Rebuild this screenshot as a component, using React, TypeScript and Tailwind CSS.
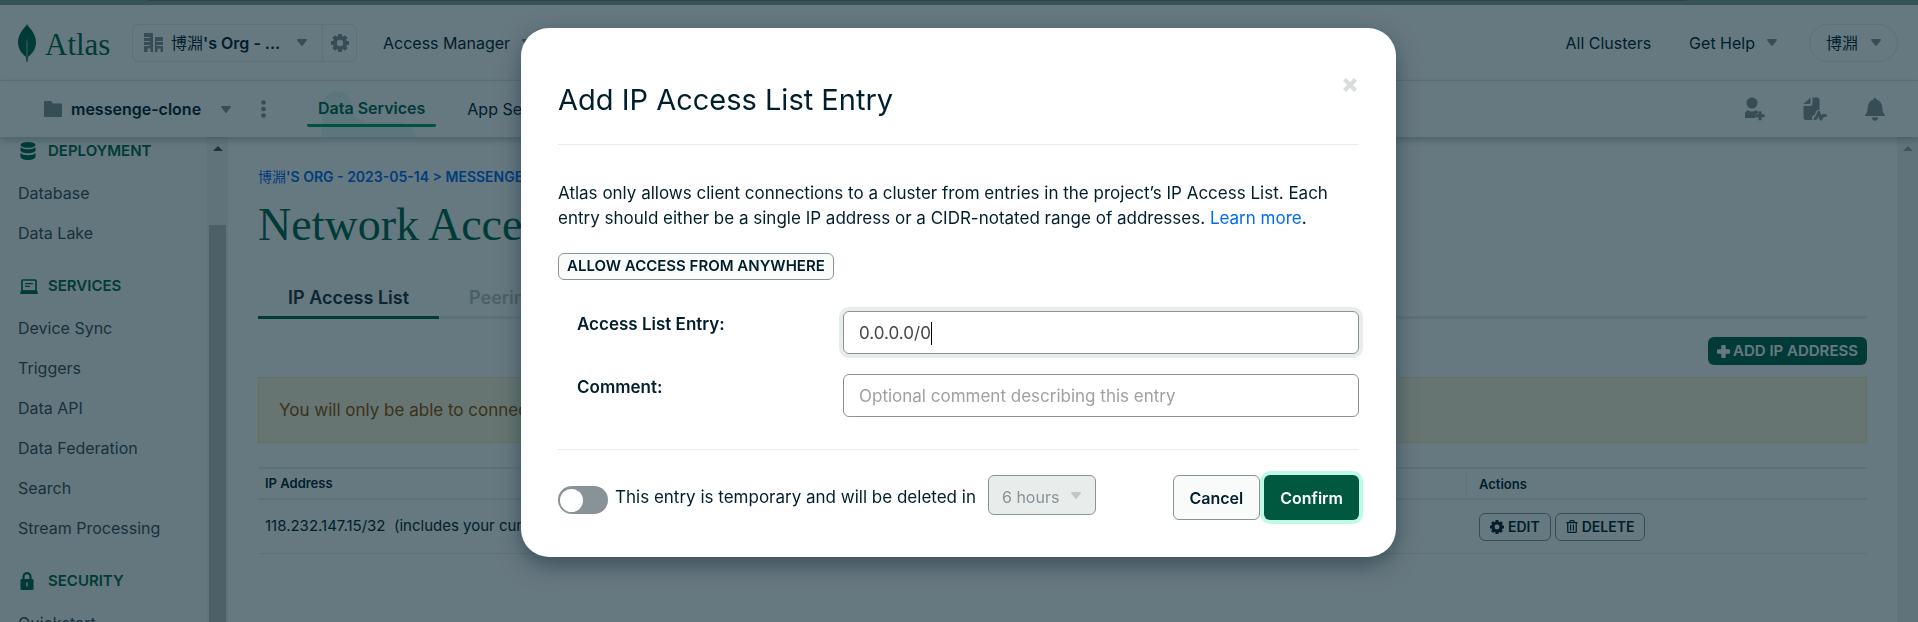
import React from "react";
import { FaRegTrashAlt } from "react-icons/fa";

function Caret({ className = "" }: { className?: string }) {
  return (
    <svg className={`h-[7px] w-[10px] shrink-0 ${className}`} viewBox="0 0 10 7" fill="currentColor" aria-hidden="true">
      <path d="M1 0h8c.8 0 1.200.8.7 1.400L5.700 6.600a.9.9 0 0 1-1.400 0L.3 1.400C-.2.8.2 0 1 0z" />
    </svg>
  );
}

function Gear({ className = "" }: { className?: string }) {
  return (
    <svg className={className} viewBox="0 0 18 18" fill="currentColor" aria-hidden="true">
      <circle cx="9" cy="9" r="5.200" fill="none" stroke="currentColor" strokeWidth="4" />
      {[0, 45, 90, 135, 180, 225, 270, 315].map((a) => (
        <rect key={a} x="7" y="0" width="4" height="4" rx="0.8" transform={`rotate(${a} 9 9)`} />
      ))}
    </svg>
  );
}

function Plus() {
  return (
    <svg className="h-[13px] w-[13px]" viewBox="0 0 13 13" fill="currentColor" aria-hidden="true">
      <path d="M5 0h3c.4 0 .7.3.7.700v3.600h3.600c.4 0 .7.3.7.700v3c0 .4-.3.700-.7.700H8.700v3.600c0 .4-.3.700-.7.700H5c-.4 0-.7-.3-.7-.700V8.700H.7C.3 8.700 0 8.400 0 8V5c0-.4.3-.700.7-.700h3.600V.7C4.300.3 4.600 0 5 0z" />
    </svg>
  );
}

function Cross() {
  return (
    <svg className="h-[14px] w-[14px]" viewBox="0 0 14 14" fill="none" stroke="currentColor" strokeWidth="4.200" aria-hidden="true">
      <path d="M1.500 1.500l11 11M12.500 1.500l-11 11" />
    </svg>
  );
}

function Leaf() {
  return (
    <svg className="h-[38px] w-[18px]" viewBox="0 0 18 38" aria-hidden="true">
      <path
        fill="#00684A"
        d="M9 0C7.500 3.500 0 8.500 0 18.500 0 26 5 30.500 8 33l.5 5h1l.5-5c3-2.500 8-7 8-14.500C18 8.500 10.500 3.500 9 0z"
      />
      <path fill="#9dbdb2" d="M9 14l.6 5-.2 14h-.8l-.2-14z" />
    </svg>
  );
}

function Building() {
  return (
    <svg className="h-[19px] w-[19px]" viewBox="0 0 19 19" aria-hidden="true">
      <path fill="#889397" d="M1 0h7c.6 0 1 .4 1 1v18H6.500v-3.500h-3V19H0V1c0-.6.400-1 1-1zM11 4h7c.6 0 1 .4 1 1v14h-2.500v-3.500h-3V19H11z" />
      <path stroke="#fff" strokeWidth="1.200" d="M0 4.500h6M0 8.500h6M0 12.500h6M12.500 8.500H19M12.500 12.500H19" />
    </svg>
  );
}

function DatabaseIcon() {
  return (
    <svg className="h-[18px] w-4" viewBox="0 0 16 18" fill="#00684A" aria-hidden="true">
      <ellipse cx="8" cy="2.900" rx="7.500" ry="2.900" />
      <path d="M.5 5c1.500 1.800 4.500 2.300 7.500 2.300S14 6.800 15.500 5v3.200C15.500 10 12 11.300 8 11.300S.5 10 .5 8.200z" />
      <path d="M.5 11c1.500 1.700 4.500 2.200 7.500 2.200s6-.5 7.500-2.200v3.800C15.500 16.600 12 18 8 18S.5 16.600.5 14.800z" />
    </svg>
  );
}

function LaptopIcon() {
  return (
    <svg className="h-[15px] w-[18px]" viewBox="0 0 18 15" aria-hidden="true">
      <rect x="2" y="1" width="14" height="11" rx="0.800" fill="none" stroke="#00684A" strokeWidth="1.700" />
      <path d="M5 4.600h8M5 7.400h5" stroke="#00684A" strokeWidth="1.200" />
      <path d="M1 11.500h16l1 3c0 .3-.2.5-.5.5H.5c-.3 0-.5-.2-.5-.5z" fill="#00684A" />
    </svg>
  );
}

function LockIcon() {
  return (
    <svg className="h-[18px] w-[14px]" viewBox="0 0 14 18" aria-hidden="true">
      <path d="M3.500 8V5a3.500 3.800 0 0 1 7 0v3" fill="none" stroke="#00684A" strokeWidth="2.200" />
      <rect x="0.500" y="7" width="13" height="11" rx="1.200" fill="#00684A" />
      <path d="M6 10.500h2v4H6z" fill="#fff" opacity=".7" />
    </svg>
  );
}

function InviteIcon() {
  return (
    <svg className="h-6 w-5" viewBox="0 0 20 24" fill="#889397" aria-hidden="true">
      <circle cx="7" cy="6" r="5.500" />
      <path d="M3 13.200c1.200.9 2.600 1.200 4 1.200s2.800-.3 4-1.200c1 .4 1.700 1 2 1.800v1.600c-1.700.2-3 1-3 2.400 0 .9.4 1.600 1 2H0v-4c0-1.800 1.200-3.200 3-3.800z" />
      <path d="M13.500 14.200h3v3.100h3.100v2.900h-3.100V23.300h-3v-3.100h-3.100v-2.900h3.100z" />
    </svg>
  );
}

function ActivityIcon() {
  return (
    <svg className="h-6 w-6" viewBox="0 0 24 24" fill="#889397" aria-hidden="true">
      <path d="M7.500.5V6c0 .6-.4 1-1 1H.5z" />
      <path d="M9.500.5H14c1.400 0 2.500 1.100 2.500 2.500v10.500c-1.500-.8-2.800-.3-3.500 1.200L11.500 18c-1.800.4-2.600 1.400-2.600 2.700 0 .9.300 1.500.9 2.300H3C1.600 23 .5 21.900.5 20.500V9H7c1.400 0 2.500-1.100 2.500-2.500z" />
      <path d="M11 21.500h2l2.800-6.300 2 7 2.200-3.700h3.500" fill="none" stroke="#889397" strokeWidth="2.800" strokeLinejoin="round" />
    </svg>
  );
}

function BellIcon() {
  return (
    <svg className="h-[23px] w-5" viewBox="0 0 20 23" fill="#889397" aria-hidden="true">
      <path d="M10 0c.8 0 1.400.6 1.500 1.400C14.800 2.300 17 5.200 17.300 9l.5 5.200 1.700 2c.8 1 .3 1.800-.7 1.800H1.200c-1 0-1.500-.8-.7-1.800l1.700-2L2.700 9C3 5.200 5.200 2.300 8.500 1.400 8.600.6 9.200 0 10 0z" />
      <path d="M6.800 19.500h6.400c-.2 2-1.500 3.300-3.200 3.300s-3-1.300-3.200-3.300z" />
    </svg>
  );
}

function ScrollArrow({ className }: { className: string }) {
  return (
    <svg className={`h-[5px] w-[10px] ${className}`} viewBox="0 0 10 5" fill="currentColor" aria-hidden="true">
      <path d="M5 0l5 5H0z" />
    </svg>
  );
}

const sections = [
  { title: "DEPLOYMENT", icon: <DatabaseIcon />, items: ["Database", "Data Lake"] },
  {
    title: "SERVICES",
    icon: <LaptopIcon />,
    items: ["Device Sync", "Triggers", "Data API", "Data Federation", "Search", "Stream Processing"],
  },
  { title: "SECURITY", icon: <LockIcon />, items: ["Quickstart"] },
];

function TopNav() {
  return (
    <header className="flex h-[76px] shrink-0 items-center border-b border-[#E8EDEB] text-base whitespace-nowrap">
      <a href="#" className="ml-[18px] flex w-[114px] items-center gap-[9px]" aria-label="Atlas home">
        <Leaf />
        <span className="pt-1 font-['Liberation_Serif',serif] text-[31px] leading-9 text-[#00684A]">Atlas</span>
      </a>
      <div className="flex h-[38px] w-[225px] rounded-md border border-[#E8EDEB]">
        <button className="flex flex-1 items-center pl-[11px] font-semibold">
          <Building />
          <span className="ml-2"><span className="font-normal">博淵</span>'s Org - ...</span>
          <Caret className="mr-[15px] ml-auto text-[#889397]" />
        </button>
        <button className="flex w-[34px] items-center justify-center border-l border-[#E8EDEB] text-[#889397]" aria-label="Organization settings">
          <Gear className="h-[18px] w-[18px]" />
        </button>
      </div>
      <button className="ml-[26px] flex items-center gap-3">
        Access Manager <Caret className="text-[#889397]" />
      </button>
      <nav className="mr-5 ml-auto flex items-center">
        <a href="#">All Clusters</a>
        <button className="ml-[38px] flex items-center gap-3">
          Get Help <Caret className="text-[#889397]" />
        </button>
        <button className="ml-8 flex h-[38px] w-[89px] items-center justify-center gap-[13px] rounded-full border border-[#E8EDEB]">
          博淵 <Caret className="text-[#889397]" />
        </button>
      </nav>
    </header>
  );
}

function ProjectNav() {
  return (
    <div className="relative z-10 flex h-14 shrink-0 items-center bg-white text-base whitespace-nowrap shadow-[0_3px_7px_rgba(0,30,43,0.25)]">
      <svg className="absolute bottom-0 left-[322px] h-[46px] w-[94px]" viewBox="0 0 94 46" fill="#E3FCF7" aria-hidden="true">
        <path d="M0 46V15a15 15 0 0 1 30 0c1 10 7 16 16 16h30c10 0 17 7 18 15z" />
      </svg>
      <button className="ml-11 flex items-center font-semibold">
        <svg className="h-4 w-[18px]" viewBox="0 0 18 16" fill="#889397" aria-hidden="true">
          <path d="M1 0h6l2 2.500h8c.6 0 1 .4 1 1V15c0 .6-.4 1-1 1H1c-.6 0-1-.4-1-1V1c0-.6.400-1 1-1z" />
        </svg>
        <span className="ml-[9px] w-[150px] text-left">messenge-clone</span>
        <Caret className="text-[#889397]" />
      </button>
      <button className="ml-[30px] text-[#889397]" aria-label="Project options">
        <svg className="h-[18px] w-[5px]" viewBox="0 0 5 18" fill="currentColor" aria-hidden="true">
          <circle cx="2.500" cy="2.500" r="2.300" /><circle cx="2.500" cy="9" r="2.300" /><circle cx="2.500" cy="15.500" r="2.300" />
        </svg>
      </button>
      <nav className="relative ml-[41px] flex items-center">
        <a href="#" className="mt-[5px] rounded-b-xs border-b-[3px] border-[#00A35C] px-[11px] pb-1 font-semibold text-[#00684A]">Data Services</a>
        <a href="#" className="ml-[31px]">App Services</a>
      </nav>
      <div className="mr-[33px] ml-auto flex items-center gap-[38px]">
        <button aria-label="Invite to project"><InviteIcon /></button>
        <button aria-label="Activity feed"><ActivityIcon /></button>
        <button aria-label="Alerts"><BellIcon /></button>
      </div>
    </div>
  );
}

function Sidebar() {
  return (
    <aside className="flex w-[228px] shrink-0 overflow-hidden bg-[#F9FBFA]">
      <nav className="flex-1 pt-1 pl-[18px] whitespace-nowrap">
        {sections.map((s) => (
          <section key={s.title} className="mb-[23px]">
            <h2 className="mb-3 flex h-5 items-center text-[15px] font-semibold text-[#00684A]">
              <span className="flex w-[30px] justify-start pl-[2px]">{s.icon}</span>
              {s.title}
            </h2>
            <ul>
              {s.items.map((i) => (
                <li key={i} className="flex h-10 items-center">
                  <a href="#" className="text-base text-[#3D4F58]">{i}</a>
                </li>
              ))}
            </ul>
          </section>
        ))}
      </nav>
      <div className="flex w-[21px] flex-col items-center bg-[#F1F1F1] pt-[9px]">
        <ScrollArrow className="text-[#505050]" />
        <div className="mt-[74px] w-[17px] flex-1 bg-[#C1C1C1]" />
      </div>
    </aside>
  );
}

function Main() {
  return (
    <main className="min-w-0 flex-1 px-[30px] pt-[30px]">
      <a href="#" className="block text-sm leading-5 font-semibold whitespace-nowrap text-[#016BF8]">
        <span className="font-normal">博淵</span>'S ORG - 2023-05-14 &gt; MESSENGE-CLONE
      </a>
      <h1 className="mt-[13px] font-['Liberation_Serif',serif] text-[46px] leading-[50px] text-[#00684A]">Network Access</h1>
      <div className="mt-[25px] flex h-11 border-b-[3px] border-[#E8EDEB] text-lg whitespace-nowrap">
        <button className="-mb-[3px] border-b-[3px] border-[#00684A] px-[30px] pt-1 font-semibold text-[#21313C]">IP Access List</button>
        <button className="px-[30px] pt-1 font-semibold text-[#B8C4C2]">Peering</button>
      </div>
      <div className="mt-[18px] flex justify-end">
        <button className="flex h-7 items-center gap-[3px] rounded-md bg-[#00684A] px-[9px] text-[15px] font-semibold text-white">
          <Plus /> ADD IP ADDRESS
        </button>
      </div>
      <p className="mt-3 h-[66px] truncate border border-[#FFEC9E] bg-[#FEF7DB] px-5 text-[17px] leading-[64px] text-[#944F01]">
        You will only be able to connect to your cluster from the following list of IP Addresses:
      </p>
      <table className="mt-6 w-full border-separate border-spacing-0 text-left whitespace-nowrap">
        <thead>
          <tr className="text-[13px] leading-[29px]">
            <th className="border-y-2 border-[#E8EDEB] px-[7px] font-semibold">IP Address</th>
            <th className="w-[401px] border-y-2 border-[#E8EDEB] font-semibold">
              <div className="h-5 border-l border-[#E8EDEB] pl-3 leading-5">Actions</div>
            </th>
          </tr>
        </thead>
        <tbody>
          <tr className="h-[54px]">
            <td className="border-b border-[#E8EDEB] px-[7px] text-[15px]">118.232.147.15/32&nbsp; (includes your current IP address)</td>
            <td className="border-b border-[#E8EDEB] pl-[13px]">
              <div className="flex gap-1">
                <button className="flex h-7 items-center gap-1 rounded-md border border-[#889397] px-[10px] text-sm font-semibold">
                  <Gear className="h-[14px] w-[14px]" /> EDIT
                </button>
                <button className="flex h-7 items-center gap-1 rounded-md border border-[#889397] px-[10px] text-sm font-semibold">
                  <FaRegTrashAlt className="h-[13px] w-3" /> DELETE
                </button>
              </div>
            </td>
          </tr>
        </tbody>
      </table>
    </main>
  );
}

function AccessModal() {
  return (
    <div className="fixed inset-0 z-20 flex items-start justify-center bg-[#001E2B]/60 pt-7 pr-px">
      <div
        role="dialog"
        aria-labelledby="dialog-title"
        className="w-[875px] max-w-full rounded-[28px] bg-white px-[37px] pb-[37px] shadow-[0_8px_24px_-2px_rgba(0,30,43,0.5)]"
      >
        <div className="flex items-start justify-between border-b border-[#E8EDEB] pt-[50px] pb-[26px]">
          <h2 id="dialog-title" className="mt-1 text-[29px] leading-9">Add IP Access List Entry</h2>
          <button className="mr-[2px] text-[#D9DDDC]" aria-label="Close"><Cross /></button>
        </div>
        <p className="mt-9 text-[17px] leading-[25px]">
          Atlas only allows client connections to a cluster from entries in the project’s IP Access List. Each entry should
          either be a single IP address or a CIDR-notated range of addresses. <a href="#" className="text-[#016BF8]">Learn more</a>.
        </p>
        <button className="mt-[22px] flex h-[27px] items-center rounded-md border border-[#889397] bg-[#F9FBFA] px-2 text-[15px] font-semibold">
          ALLOW ACCESS FROM ANYWHERE
        </button>
        <div className="mt-[31px] grid grid-cols-[266px_1fr] gap-x-0 gap-y-5 pl-[19px] text-[17px]">
          <label htmlFor="entry" className="leading-[26px] font-semibold">Access List Entry:</label>
          <div className="relative">
            <input
              id="entry"
              defaultValue="0.0.0.0/0"
              className="h-[43px] w-full rounded-md border border-[#889397] px-[15px] text-[#494747] ring-4 ring-[#E8EDEB] outline-none"
            />
            <span className="absolute top-[11px] left-[88px] h-[23px] w-px bg-black" />
          </div>
          <label htmlFor="comment" className="leading-[26px] font-semibold">Comment:</label>
          <input
            id="comment"
            placeholder="Optional comment describing this entry"
            className="h-[43px] w-full rounded-md border border-[#889397] px-[15px] outline-none placeholder:text-[#A0A0A0]"
          />
        </div>
        <div className="mt-8 flex items-start border-t border-[#E8EDEB] pt-[25px]">
          <input
            id="temporary"
            type="checkbox"
            role="switch"
            className="mt-[11px] flex h-7 w-[50px] shrink-0 appearance-none items-center rounded-full bg-[#889397] pl-[2px] before:h-[23px] before:w-[23px] before:rounded-full before:bg-white before:content-['']"
          />
          <label htmlFor="temporary" className="ml-[7px] text-[17px] leading-[44px] whitespace-nowrap">
            This entry is temporary and will be deleted in
          </label>
          <div className="relative ml-3">
            <select
              aria-label="Delete after"
              disabled
              className="h-10 w-[108px] appearance-none rounded-md border border-[#889397] bg-[#E8EDEB] pt-1 pl-[13px] text-base text-[#889397] opacity-100"
            >
              <option>6 hours</option>
            </select>
            <Caret className="pointer-events-none absolute top-[17px] right-[15px] text-[#C1C7C6]" />
          </div>
          <div className="ml-auto flex gap-1 text-base">
            <button className="h-[45px] rounded-md border border-[#889397] bg-[#F9FBFA] px-4 font-semibold">Cancel</button>
            <button className="h-[45px] rounded-md bg-[#00593F] px-4 font-semibold text-white ring-4 ring-[#C0FAE6]">Confirm</button>
          </div>
        </div>
      </div>
    </div>
  );
}

export default function App() {
  return (
    <div className="flex h-screen flex-col overflow-hidden bg-white font-[Inter,'Noto_Sans_CJK_TC',sans-serif] text-[#001E2B]">
      <div className="h-[5px] shrink-0 bg-[#87A399] pr-[231px] pl-[147px]">
        <div className="h-px bg-[#807878]" />
      </div>
      <TopNav />
      <ProjectNav />
      <div className="flex min-h-0 flex-1">
        <Sidebar />
        <Main />
        <div className="flex w-[21px] shrink-0 justify-center bg-[#F1F1F1] pt-[9px]">
          <ScrollArrow className="text-[#A3A3A3]" />
        </div>
      </div>
      <AccessModal />
    </div>
  );
}
